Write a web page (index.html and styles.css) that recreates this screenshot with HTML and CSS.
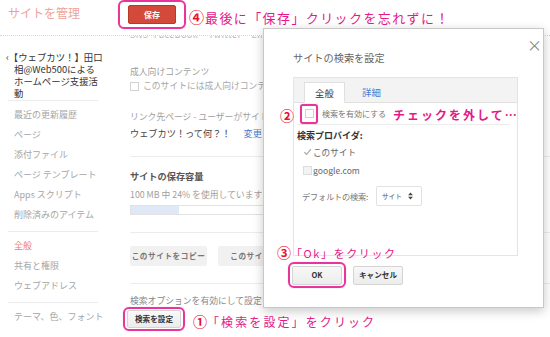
FILE: index.html
```html
<!DOCTYPE html>
<html lang="ja">
<head>
<meta charset="utf-8">
<title>サイトを管理</title>
<link rel="stylesheet" href="styles.css">
</head>
<body>
<div class="page">
  <header class="topbar">
    <h1 class="title">サイトを管理</h1>
    <span class="ring ring-save"><button class="btn-save">保存</button></span>
    <span class="note note4"><span class="num">④</span>最後に「保存」クリックを忘れずに！</span>
  </header>

  <div class="layout">
    <nav class="side">
      <div class="site-name">‹【ウェブカツ！】田口<br>相@<span class="lt">Web500</span>による<br>ホームページ支援活<br>動</div>
      <hr class="side-rule">
      <ul class="menu">
        <li>最近の更新履歴</li>
        <li>ページ</li>
        <li>添付ファイル</li>
        <li>ページ テンプレート</li>
        <li>Apps スクリプト</li>
        <li>削除済みのアイテム</li>
      </ul>
      <hr class="side-rule">
      <ul class="menu">
        <li class="active">全般</li>
        <li>共有と権限</li>
        <li>ウェブアドレス</li>
      </ul>
      <hr class="side-rule">
      <ul class="menu">
        <li>テーマ、色、フォント</li>
      </ul>
    </nav>

    <main class="main">
      <div class="cut"><span>SNS&nbsp;&nbsp;Facebook&nbsp;&nbsp;&nbsp;&nbsp;Twitter&nbsp;&nbsp;&nbsp;&nbsp;LINE</span></div>

      <div class="label label-adult">成人向けコンテンツ</div>
      <div class="check-row"><span class="box"></span>このサイトには成人向けコンテンツが含まれています</div>

      <div class="label label-link">リンク先ページ - ユーザーがサイトにアクセスしたときに表示されるページ</div>
      <div class="landing">ウェブカツ！って何？！<a class="link">変更</a></div>

      <div class="section">
        <div class="heading">サイトの保存容量</div>
        <div class="label usage">100 MB 中 24% を使用しています</div>
        <div class="bar"><div class="fill" style="width:24%"></div></div>
      </div>

      <div class="section">
        <div class="btn-row">
          <span class="gbtn">このサイトをコピー</span>
          <span class="gbtn">このサイトを削除</span>
        </div>
      </div>

      <div class="section">
        <div class="label search-label">検索オプションを有効にして設定 - <a class="link">詳細</a></div>
        <span class="ring ring-search"><button class="btn-std btn-search">検索を設定</button></span>
      </div>
    </main>
  </div>

  <span class="note note1"><span class="num">①</span>「検索を設定」をクリック</span>

  <div class="dialog">
    <span class="close">×</span>
    <div class="dlg-title">サイトの検索を設定</div>
    <div class="panel">
      <div class="tabs">
        <span class="tab active">全般</span>
        <span class="tab link">詳細</span>
      </div>
      <div class="enable-row">
        <span class="ring ring-check"><span class="box"></span></span>
        <span class="enable-text">検索を有効にする</span>
      </div>
      <div class="prov-title">検索プロバイダ:</div>
      <div class="prov"><span class="box checked"><svg viewBox="0 0 10 10" width="10" height="10"><path d="M1.5 5.2 L4 7.6 L8.8 1.8" fill="none" stroke="#aaa" stroke-width="1.4"/></svg></span>このサイト</div>
      <div class="prov"><span class="box"></span>google.com</div>
      <div class="default-row">
        <span class="default-label">デフォルトの検索:</span>
        <span class="select"><span>サイト</span><svg viewBox="0 0 6 10" width="5" height="8"><path d="M0 4 L3 0.5 L6 4 Z M0 6 L3 9.5 L6 6 Z" fill="#444"/></svg></span>
      </div>
    </div>
    <div class="dlg-actions">
      <span class="ring ring-ok"><button class="btn-std btn-ok">OK</button></span>
      <button class="btn-std btn-cancel">キャンセル</button>
    </div>
  </div>

  <span class="note note2"><span class="num">②</span></span>
  <span class="note note2b">チェックを外して…</span>
  <span class="note note3"><span class="num">③</span>「Ok」をクリック</span>
</div>
</body>
</html>
```
FILE: styles.css
```css
* { box-sizing: border-box; }
html, body { margin: 0; padding: 0; background: #fff; }
body {
  font-family: "Noto Sans CJK JP", "Noto Sans", sans-serif;
  color: #999;
}
.page {
  position: relative;
  width: 550px;
  height: 337px;
  overflow: hidden;
  background: #fff;
}

/* header */
.topbar {
  height: 36px;
  display: flex;
  align-items: flex-start;
  border-bottom: 1px dotted #d6d6d6;
}
.title {
  margin: 5px 0 0 8px;
  font-size: 12px;
  line-height: 16px;
  font-weight: 400;
  color: #eea39a;
  width: 72px;
  white-space: nowrap;
}
.ring {
  display: inline-flex;
  align-items: center;
  border: 2px solid #e8359c;
  border-radius: 6px;
  box-shadow: 0 0 1px #f08fc6;
}
.ring-save {
  margin: 0 0 0 38px;
  padding: 3px 8px;
  height: 29px;
}
.btn-save {
  width: 48px;
  height: 19px;
  padding: 0;
  border: 1px solid #b63a2c;
  border-radius: 2px;
  background: #d44a3a;
  color: #fff;
  font: 700 8px/17px "Noto Sans CJK JP", sans-serif;
}

/* annotations */
.note {
  position: absolute;
  color: #e6198a;
  white-space: nowrap;
  font-family: "Noto Sans CJK JP", sans-serif;
  font-weight: 400;
}
.num {
  color: #e8102f;
  font-weight: 700;
}
.note4 {
  left: 189px;
  top: 8px;
  font-size: 13px;
  line-height: 18px;
  letter-spacing: 1.4px;
}
.note4 .num { letter-spacing: 0; font-size: 15px; margin-right: 1px; }
.note1 {
  left: 193px;
  top: 312px;
  font-size: 12px;
  line-height: 18px;
  letter-spacing: 2.1px;
}
.note1 .num { font-size: 14px; letter-spacing: 0; }
.note2 {
  left: 280px;
  top: 106px;
  font-size: 14px;
  line-height: 18px;
}
.note2b {
  left: 393px;
  top: 106px;
  font-size: 12px;
  line-height: 18px;
  font-weight: 700;
  letter-spacing: 2px;
}
.note3 {
  left: 277px;
  top: 243px;
  font-size: 11px;
  line-height: 18px;
  letter-spacing: 1.6px;
}
.note3 .num { font-size: 14px; letter-spacing: 0; }

/* layout */
.layout {
  display: grid;
  grid-template-columns: 100px 1fr;
}

/* sidebar */
.side {
  padding: 15px 2px 0 8px;
  font-size: 10px;
}
.site-name {
  padding-left: 6px;
  text-indent: -8px;
  color: #333;
  font-size: 9.4px;
  line-height: 12px;
  white-space: nowrap;
  height: 49px;
}
.site-name .lt { color: #333; }
.side-rule {
  margin: 0;
  border: 0;
  border-top: 1px solid #ececec;
}
.site-name + .side-rule { margin-bottom: 4px; }
.menu {
  list-style: none;
  margin: 0;
  padding: 0 0 0 6px;
}
.menu li {
  font-size: 9px;
  line-height: 20px;
  color: #a6a6a6;
  white-space: nowrap;
}
.menu li.active { color: #ee7b6c; }
.menu + .side-rule { margin: 6px 0 4px; }

/* main */
.main {
  padding-left: 30px;
  overflow: hidden;
  white-space: nowrap;
  font-size: 8.8px;
}
.cut {
  height: 5px;
  overflow: hidden;
}
.cut span {
  display: block;
  margin-top: -7px;
  font-size: 9px;
  line-height: 12px;
  color: #b5b5b5;
  letter-spacing: 0.5px;
}
.label {
  line-height: 14px;
  color: #a0a0a0;
}
.label-adult { margin-top: 24px; }
.check-row {
  display: flex;
  align-items: center;
  line-height: 14px;
  color: #a8a8a8;
}
.box {
  display: inline-flex;
  align-items: center;
  justify-content: center;
  width: 9px;
  height: 9px;
  border: 1px solid #d2d2d2;
  background: #fff;
  margin-right: 4px;
  flex: none;
}
.label-link { margin-top: 17px; }
.landing {
  margin-top: 2px;
  line-height: 14px;
  color: #444;
  font-size: 9.2px;
}
.link { color: #4a7bd0; }
.landing .link { margin-left: 13px; }
.section {
  margin-top: 16px;
  border-top: 1px solid #ececec;
}
.heading {
  margin-top: 12px;
  line-height: 14px;
  color: #555;
  font-weight: 700;
  font-size: 9.2px;
}
.usage { margin-top: 5px; }
.bar {
  margin-top: 3px;
  height: 10px;
  width: 200px;
  border: 1px solid #e2e2e2;
  background: #fff;
}
.fill {
  height: 100%;
  background: #dfe8f6;
}
.section + .section { margin-top: 17px; }
.btn-row {
  margin-top: 13px;
  display: flex;
  gap: 11px;
}
.gbtn {
  display: inline-block;
  height: 20px;
  width: 77px;
  line-height: 20px;
  text-align: center;
  background: #f1f1f1;
  border-radius: 2px;
  font-size: 7.6px;
  font-weight: 700;
  color: #777;
  letter-spacing: 0.6px;
}
.gbtn + .gbtn { width: 90px; }
.search-label {
  margin-top: 11px;
  line-height: 12px;
  color: #888;
}
.ring-search {
  margin-left: -7px;
  padding: 1px 2px;
}
.btn-std {
  height: 18px;
  padding: 0;
  border: 1px solid #d4d4d4;
  border-radius: 2px;
  background: linear-gradient(#f8f8f8, #ececec);
  color: #333;
  font: 700 7.6px/16px "Noto Sans CJK JP", sans-serif;
}
.btn-search { width: 54px; }

/* dialog */
.dialog {
  position: absolute;
  left: 263px;
  top: 28px;
  width: 281px;
  height: 280px;
  background: #fff;
  border: 1px solid #c8c8c8;
  box-shadow: 0 3px 10px rgba(0, 0, 0, 0.22);
  padding: 21px 0 0 29px;
}
.close {
  position: absolute;
  left: 263px;
  top: 7px;
  font-size: 15px;
  line-height: 18px;
  color: #888;
}
.dlg-title {
  font-size: 10.2px;
  line-height: 16px;
  color: #666;
}
.panel {
  margin-top: 11px;
  width: 225px;
  height: 179px;
  border: 1px solid #e4e4e4;
  padding: 0 7px 0 3px;
}
.tabs {
  margin: 0 -7px 0 -3px;
  height: 25px;
  background: #f3f3f3;
  border-bottom: 1px solid #e0e0e0;
  display: flex;
  align-items: flex-end;
  padding-left: 10px;
}
.tab {
  font-size: 9.4px;
  line-height: 20px;
  height: 21px;
  margin-bottom: -1px;
}
.tab.active {
  width: 41px;
  text-align: center;
  background: #fff;
  border: 1px solid #e0e0e0;
  border-bottom: 1px solid #fff;
  color: #333;
}
.tab.link {
  margin-left: 17px;
  color: #4a7bd0;
  border: 0;
}
.enable-row {
  height: 22px;
  display: flex;
  align-items: center;
  border-bottom: 1px solid #ececec;
  font-size: 8px;
  color: #777;
}
.ring-check {
  width: 18px;
  height: 20px;
  margin-left: 3px;
  justify-content: center;
  border-radius: 3px;
}
.ring-check .box { margin: 0; }
.enable-text { margin-left: 4px; }
.prov-title {
  margin-top: 4px;
  font-size: 9px;
  line-height: 14px;
  font-weight: 700;
  color: #333;
}
.prov {
  padding-left: 6px;
  display: flex;
  align-items: center;
  height: 18px;
  font-size: 8.6px;
  color: #666;
}
.prov .box { margin-right: 1px; border-color: #ddd; background: #f3f3f3; }
.prov .box.checked { border: 0; background: transparent; }
.default-row {
  margin-top: 6px;
  padding-left: 5px;
  display: flex;
  align-items: center;
  height: 21px;
}
.default-label {
  width: 74px;
  font-size: 8.2px;
  color: #777;
  white-space: nowrap;
  letter-spacing: -0.2px;
}
.select {
  display: inline-flex;
  align-items: center;
  justify-content: space-between;
  width: 46px;
  height: 20px;
  padding: 0 8px 0 5px;
  border: 1px solid #e2e2e2;
  border-radius: 2px;
  font-size: 6.6px;
  color: #555;
  white-space: nowrap;
}
.dlg-actions {
  margin-top: 6px;
  margin-left: -5px;
  display: flex;
  align-items: center;
  gap: 7px;
}
.ring-ok {
  padding: 1px 2px;
  height: 26px;
}
.btn-ok { width: 50px; height: 19px; }
.btn-cancel { width: 50px; height: 19px; }
```
